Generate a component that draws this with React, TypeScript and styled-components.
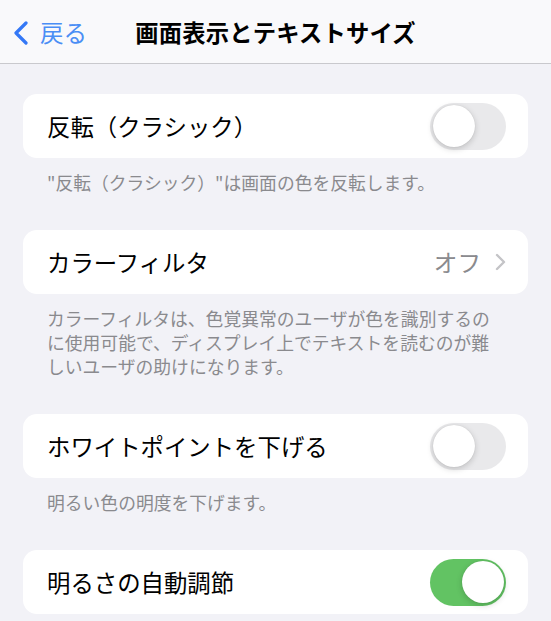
import styled, { createGlobalStyle } from 'styled-components';
import { useState } from 'react';

const GlobalStyle = createGlobalStyle`
    html, body {
        margin: 0;
        padding: 0;
        background: #f2f2f7;
    }
    body {
        font-family: 'Noto Sans CJK JP', 'Noto Sans', sans-serif;
        -webkit-font-smoothing: antialiased;
    }
`;

interface SettingRow {
    id: string;
    label: string;
    footer?: string;
    kind: 'toggle' | 'link';
    value?: string;
    on?: boolean;
}

const rows: SettingRow[] = [
    { id: 'invert', label: '反転（クラシック）', footer: '"反転（クラシック）"は画面の色を反転します。', kind: 'toggle', on: false },
    {
        id: 'filter',
        label: 'カラーフィルタ',
        footer: 'カラーフィルタは、色覚異常のユーザが色を識別するのに使用可能で、ディスプレイ上でテキストを読むのが難しいユーザの助けになります。',
        kind: 'link',
        value: 'オフ',
    },
    { id: 'whitepoint', label: 'ホワイトポイントを下げる', footer: '明るい色の明度を下げます。', kind: 'toggle', on: false },
    { id: 'auto', label: '明るさの自動調節', kind: 'toggle', on: true },
];

const App = () => {
    const [toggles, setToggles] = useState<Record<string, boolean>>(() =>
        Object.fromEntries(rows.map((r) => [r.id, !!r.on]))
    );

    const flip = (id: string) => setToggles({ ...toggles, [id]: !toggles[id] });

    return (
        <Page>
            <GlobalStyle />
            <NavBar>
                <BackButton type='button'>
                    <svg width='18' height='24' viewBox='0 0 18 24'>
                        <path d='M14 2 L4 12 L14 22' fill='none' stroke='#3478f6' strokeWidth='3.2' strokeLinecap='round' strokeLinejoin='round' />
                    </svg>
                    <span>戻る</span>
                </BackButton>
                <Title>画面表示とテキストサイズ</Title>
            </NavBar>
            <Content>
                {rows.map((row) => (
                    <Section key={row.id}>
                        <Card>
                            <Label>{row.label}</Label>
                            {row.kind === 'toggle' ? (
                                <Switch $on={toggles[row.id]} onClick={() => flip(row.id)} aria-pressed={toggles[row.id]}>
                                    <Knob $on={toggles[row.id]} />
                                </Switch>
                            ) : (
                                <Detail>
                                    <span>{row.value}</span>
                                    <svg width='12' height='18' viewBox='0 0 12 18'>
                                        <path d='M3 2 L10 9 L3 16' fill='none' stroke='#c4c4c7' strokeWidth='2.4' strokeLinecap='round' strokeLinejoin='round' />
                                    </svg>
                                </Detail>
                            )}
                        </Card>
                        {row.footer && <Footer>{row.footer}</Footer>}
                    </Section>
                ))}
            </Content>
        </Page>
    );
};

const Page = styled.div`
    min-height: 621px;
    background: #f2f2f7;
`;

const NavBar = styled.header`
    position: relative;
    height: 63px;
    display: flex;
    align-items: center;
    justify-content: center;
    background: #f9f9fb;
    border-bottom: 1px solid #c9c9cd;
`;

const BackButton = styled.button`
    position: absolute;
    left: 12px;
    top: 0;
    bottom: 0;
    display: flex;
    align-items: center;
    gap: 10px;
    padding: 0;
    border: none;
    background: none;
    color: #4a8ef5;
    font-family: inherit;
    font-size: 23.5px;
    cursor: pointer;

    svg {
        margin-top: 2px;
    }
`;

const Title = styled.h1`
    margin: 0;
    font-size: 23.3px;
    font-weight: 700;
    color: #000;
    letter-spacing: 0.2px;
`;

const Content = styled.main`
    padding: 30px 23px 0;
`;

const Section = styled.section`
    margin-bottom: 36px;
`;

const Card = styled.div`
    height: 64px;
    display: flex;
    align-items: center;
    justify-content: space-between;
    padding: 0 22px 0 24px;
    background: #fff;
    border-radius: 14px;
`;

const Label = styled.span`
    font-size: 23.4px;
    color: #000;
`;

const Switch = styled.button<{ $on: boolean }>`
    position: relative;
    width: 76px;
    height: 47px;
    padding: 0;
    border: none;
    border-radius: 24px;
    background: ${(p) => (p.$on ? '#62c363' : '#e9e9eb')};
    cursor: pointer;
`;

const Knob = styled.span<{ $on: boolean }>`
    position: absolute;
    top: 2.5px;
    left: ${(p) => (p.$on ? '31.5px' : '2.5px')};
    width: 42px;
    height: 42px;
    border-radius: 50%;
    background: #fff;
    box-shadow: 0 2px 6px rgba(0, 0, 0, 0.18), 0 0 1px rgba(0, 0, 0, 0.15);
`;

const Detail = styled.span`
    display: flex;
    align-items: center;
    gap: 13px;
    font-size: 23.6px;
    color: #8a8a8e;
    margin-right: 0;
`;

const Footer = styled.p`
    margin: 0;
    padding: 12px 24px 0;
    font-size: 17.8px;
    line-height: 24px;
    color: #8a8a8e;
`;

export default App;
